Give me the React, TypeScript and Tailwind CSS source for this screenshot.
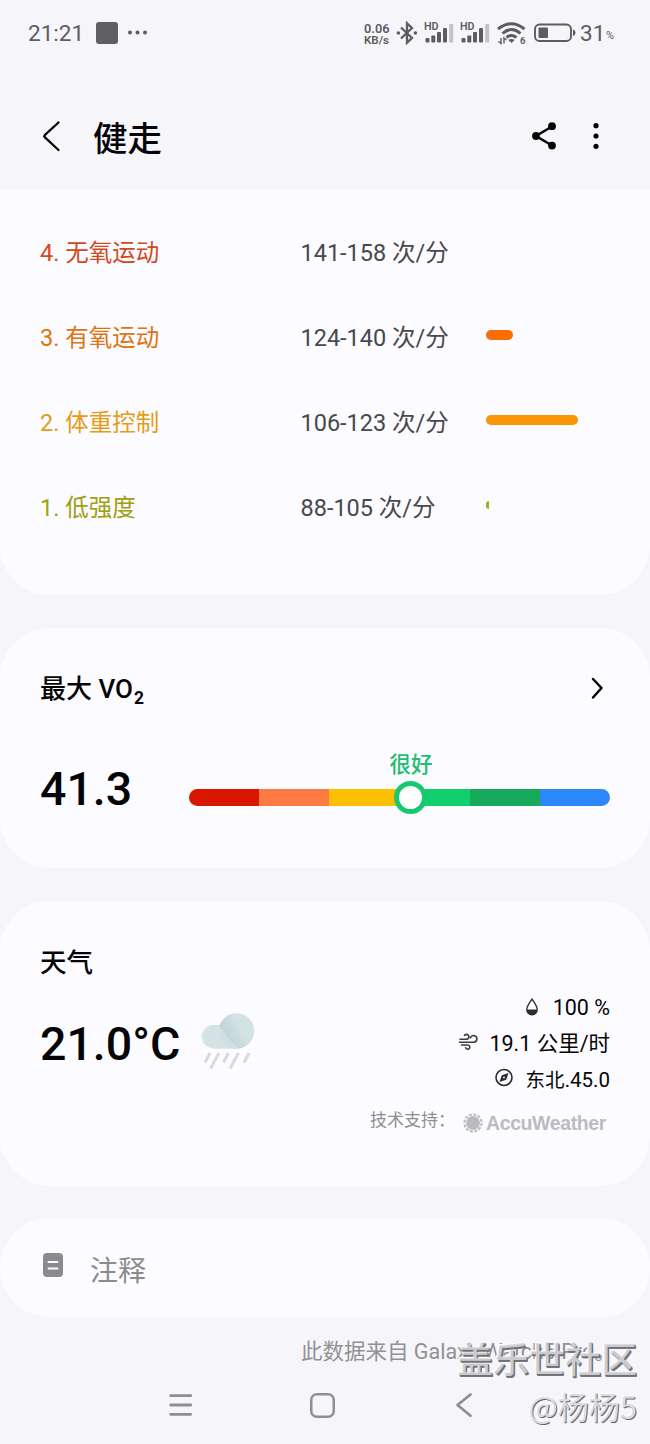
import type { ReactNode } from 'react';

type Zone = { name: string; range: string; text: string; bar: string };

const zones: Zone[] = [
  { name: '4. 无氧运动', range: '141-158 次/分', text: 'text-[#d14a1c]', bar: 'hidden' },
  { name: '3. 有氧运动', range: '124-140 次/分', text: 'text-[#dd7411]', bar: 'w-[27px] bg-[#f96d02]' },
  { name: '2. 体重控制', range: '106-123 次/分', text: 'text-[#e69c15]', bar: 'w-[92px] bg-[#fc9503]' },
  { name: '1. 低强度', range: '88-105 次/分', text: 'text-[#9da012]', bar: '' },
];

const segments = ['bg-[#d91700]', 'bg-[#ff7a42]', 'bg-[#fcc003]', 'bg-[#12cf6e]', 'bg-[#17aa5c]', 'bg-[#2c87fb]'];

function Card({ className, children }: { className: string; children: ReactNode }) {
  return <section className={`bg-[#fcfbff] ${className}`}>{children}</section>;
}

function Signal() {
  return (
    <svg className="h-[26px] w-[31px]" viewBox="0 0 31 26" fill="#5d5c61">
      <text x="0" y="10" fontSize="10.5" fontWeight="600" fontFamily="Roboto, sans-serif" textLength="14.5" lengthAdjust="spacingAndGlyphs">HD</text>
      <rect x="1.500" y="18" width="4" height="4.500" rx="1" />
      <rect x="7.300" y="15.500" width="4" height="7" rx="1" />
      <rect x="13" y="12" width="4" height="10.500" rx="1" />
      <rect x="19" y="8" width="4" height="14.500" rx="1" />
      <rect x="25.200" y="4" width="4" height="18.500" rx="1" fill="#c3c2c8" />
    </svg>
  );
}

function StatusBar() {
  return (
    <div className="flex h-[66px] items-center pl-[28px] text-[#5d5c61]">
      <span className="w-[68px] text-[22.5px] leading-none">21:21</span>
      <span className="h-[22px] w-[22px] rounded-[3px] bg-[#5f5e63]" />
      <svg className="ml-[9px] h-[6px] w-[22px]" viewBox="0 0 22 6" fill="#5d5c61">
        <circle cx="3" cy="2.500" r="2" /><circle cx="10.500" cy="2.500" r="2" /><circle cx="18" cy="2.500" r="2" />
      </svg>
      <svg className="ml-[215px] h-[26px] w-[30px]" viewBox="0 0 30 26" fill="#5d5c61" fontFamily="Roboto, sans-serif" fontSize="12" fontWeight="600">
        <text x="0" y="13" textLength="25.500" lengthAdjust="spacingAndGlyphs">0.06</text>
        <text x="0" y="24.300" fontSize="11.500" textLength="25" lengthAdjust="spacingAndGlyphs">KB/s</text>
      </svg>
      <svg className="ml-[2px] h-[24px] w-[22px]" viewBox="0 0 22 24" fill="none" stroke="#5d5c61" strokeWidth="2.300">
        <path d="M5 6.500 16 17l-5 4.700V2.300L16 7 5 17.500" />
        <circle cx="2.400" cy="12" r="1.800" fill="#5d5c61" stroke="none" />
        <circle cx="19.400" cy="12" r="1.800" fill="#5d5c61" stroke="none" />
      </svg>
      <div className="ml-[6px] flex gap-[5px]"><Signal /><Signal /></div>
      <svg className="ml-[6px] h-[26px] w-[30px]" viewBox="0 0 30 26" fill="none" stroke="#5d5c61" strokeWidth="3">
        <path d="M1 9Q14.500-1.500 27.500 9" />
        <path d="M5.500 13.500Q14.500 5.500 23.500 13.500" />
        <path d="M9.500 17.500Q14.500 13.500 19.500 17.500" />
        <path d="m14.500 23-3.200-3q3.200-2 6.400 0Z" fill="#5d5c61" stroke="none" />
        <path d="M4 18v5.500l-2.500-2M7 23.500V18l2.500 2" strokeWidth="1.400" />
        <text x="23" y="24" fontSize="9.500" fontWeight="700" fontFamily="Roboto, sans-serif" fill="#5d5c61" stroke="none">6</text>
      </svg>
      <svg className="ml-[7px] h-[20px] w-[42px]" viewBox="0 0 42 20">
        <rect x="1" y="1.500" width="36" height="16.500" rx="4.500" fill="none" stroke="#5d5c61" strokeWidth="1.900" />
        <rect x="4.500" y="4.500" width="9.500" height="10.500" rx="1" fill="#5d5c61" />
        <path d="M39 6.500q2.500 .5 2.500 3.200T39 12.900Z" fill="#5d5c61" />
      </svg>
      <span className="ml-[4px] text-[22.5px] leading-none">31</span>
      <span className="mt-[6px] ml-[1px] origin-left scale-x-[0.95] text-[11.5px] leading-none">%</span>
    </div>
  );
}

export default function App() {
  return (
    <div className="relative h-[1444px] w-[650px] overflow-hidden bg-[#f5f5fa] font-['Roboto','Noto_Sans_CJK_SC',sans-serif] text-[#050507]">
      <StatusBar />

      <header className="flex h-[123px] items-start pl-[42px]">
        <svg className="mt-[54px] h-[34px] w-[20px]" viewBox="0 0 20 34" fill="none" stroke="#050507" strokeWidth="2.300" strokeLinecap="round" strokeLinejoin="round">
          <path d="M16.500 2.500 2.700 15.200q-1 1 0 2L16.500 30" />
        </svg>
        <h1 className="mt-[48px] ml-[31px] w-[430px] text-[34.5px] leading-[50px] font-medium">健走</h1>
        <svg className="mt-[55px] ml-[8px] h-[30px] w-[28px]" viewBox="0 0 28 30" fill="#050507">
          <path d="M21 5.500 5 15l16 9.500" fill="none" stroke="#050507" strokeWidth="2.600" />
          <circle cx="5" cy="15" r="3.900" /><circle cx="21" cy="5.200" r="3.900" /><circle cx="21" cy="24.600" r="3.900" />
        </svg>
        <svg className="mt-[55px] ml-[32px] h-[30px] w-[10px]" viewBox="0 0 10 30" fill="#050507">
          <circle cx="5" cy="4.700" r="2.600" /><circle cx="5" cy="15" r="2.600" /><circle cx="5" cy="25.300" r="2.600" />
        </svg>
      </header>

      <Card className="h-[406px] rounded-b-[50px] pt-[21px] pl-[40px]">
        {zones.map((zone) => (
          <div key={zone.name} className="flex h-[85px] items-center text-[23.5px] leading-[34px]">
            <span className={`w-[260px] ${zone.text}`}>{zone.name}</span>
            <span className="w-[186px] pl-[0.500px] text-[#48484d]">{zone.range}</span>
            {zone.bar ? (
              <span className={`mb-[5px] h-[10px] rounded-full ${zone.bar}`} />
            ) : (
              <span className="mb-[5px] h-[8px] w-[3px] rounded-l-full bg-[#91b52b]" />
            )}
          </div>
        ))}
      </Card>

      <Card className="mt-[33px] h-[240px] rounded-[50px] pt-[40px] pr-[40px] pl-[40px]">
        <div className="flex h-[42px] items-center justify-between">
          <h2 className="mt-[8px] flex text-[26px] leading-[42px] font-medium">
            <span>最大 VO</span><span className="mt-[9px] ml-[1px] text-[17.5px] font-bold">2</span>
          </h2>
          <svg className="mr-[5px] h-[24px] w-[16px]" viewBox="0 0 16 24" fill="none" stroke="#050507" strokeWidth="2.500" strokeLinecap="round" strokeLinejoin="round">
            <path d="m4 2 8.500 9L4 20.500" />
          </svg>
        </div>
        <div className="mt-[49px] flex h-[60px] items-center">
          <span className="w-[149px] text-[46.5px] leading-[60px] font-medium">41.3</span>
          <div className="relative mt-[16px] flex-1">
            <div className="flex h-[17px] overflow-hidden rounded-full">
              {segments.map((color) => <span key={color} className={`flex-1 ${color}`} />)}
            </div>
            <span className="absolute top-[-8px] left-[205px] h-[33px] w-[33px] rounded-full border-[5.5px] border-[#18c86f] bg-white" />
            <span className="absolute top-[-41px] left-[200.500px] text-[21.5px] leading-[34px] font-medium whitespace-nowrap text-[#23bd72]">很好</span>
          </div>
        </div>
      </Card>

      <Card className="mt-[33px] flex h-[285px] justify-between rounded-[50px] pt-[40px] pr-[40px] pl-[40px]">
        <div className="pt-[1px]">
          <h2 className="text-[26.5px] leading-[42px] font-medium">天气</h2>
          <div className="mt-[30px] flex h-[60px] items-center">
            <span className="w-[159px] text-[46.5px] leading-[60px] font-medium">21.0°C</span>
            <svg className="mb-[6px] h-[60px] w-[60px]" viewBox="0 0 60 60">
              <defs>
                <linearGradient id="cloud" gradientUnits="userSpaceOnUse" x1="25" y1="25" x2="43" y2="16">
                  <stop offset="0" stopColor="#c1d3d6" /><stop offset="1" stopColor="#d3e2e3" />
                </linearGradient>
              </defs>
              <path d="M14.500 14A11.800 11.800 0 0 0 14.500 37.500H38A17.800 17.800 0 0 0 38 14Z" fill="#d4e3e4" />
              <circle cx="37.500" cy="20" r="17.800" fill="url(#cloud)" />
              <path d="M14.500 37.500a11.800 11.800 0 1 1 9.500-18.500q5 10 16 18.500Z" fill="#d4e4e5" fillOpacity="0.750" />
              <g stroke="#d7dade" strokeWidth="3">
                <path d="m11 42-5 9.500M20 42l-8.500 15.500M29.500 42l-5 9.500M39.500 42 31 57.500M50 42l-5 9.500" />
              </g>
            </svg>
          </div>
        </div>
        <div className="mt-[48px] flex flex-col items-end text-[21px] leading-[36px]">
          <div className="flex h-[36px] items-center gap-[14px]">
            <svg className="mb-[1px] h-[20px] w-[14px]" viewBox="0 0 14 20">
              <path d="M7 2.200Q1.800 9.200 1.800 12.500a5.200 5.200 0 0 0 10.400 0Q12.200 9.200 7 2.200Z" fill="none" stroke="#2c2c30" strokeWidth="1.400" />
              <path d="M2 12.500h10q0 5-5 5t-5-5Z" fill="#2c2c30" />
            </svg>
            <span className="mt-[2px] text-[21.500px]">100 %</span>
          </div>
          <div className="flex h-[36px] items-center gap-[11px]">
            <svg className="mb-[2px] h-[18px] w-[20px]" viewBox="0 0 20 18" fill="none" stroke="#3c3c40" strokeWidth="1.600" strokeLinecap="round">
              <path d="M2 6.200h6.500a2.400 2.400 0 1 0-2-3.700M1.500 9.200h14a3.300 3.300 0 1 0-3-4.500M3.500 12h6.200a2.100 2.100 0 1 1-2 2.800" />
            </svg>
            <span className="mt-[2px] text-[21.5px]">19.1 公里/时</span>
          </div>
          <div className="flex h-[36px] items-center gap-[12px]">
            <svg className="mb-[2px] h-[20px] w-[20px]" viewBox="0 0 20 20">
              <circle cx="10" cy="9.500" r="8" fill="none" stroke="#2c2c30" strokeWidth="1.600" />
              <path d="M14.500 5 12.200 11.700 5.500 14 7.800 7.300Z" fill="#2c2c30" />
              <circle cx="10" cy="9.500" r="0.900" fill="#fcfbff" />
            </svg>
            <span className="mt-[2px] text-[20.5px]"><span className="text-[19.5px]">东北</span>.45.0</span>
          </div>
          <div className="mt-[5px] mr-[4px] flex h-[36px] items-center text-[#8e8e92]">
            <span className="w-[92px] text-[17px] leading-[36px]">技术支持：</span>
            <svg className="mt-[5px] h-[22px] w-[22px]" viewBox="0 0 22 22" fill="#babac0">
              <circle cx="11" cy="11" r="6.900" />
              <circle cx="11" cy="11" r="8.600" fill="none" stroke="#babac0" strokeWidth="2" strokeDasharray="3 1.503" />
            </svg>
            <span className="mt-[5px] ml-[2px] w-[120px] font-['Liberation_Sans'] text-[19.500px] font-bold tracking-[-0.400px] text-[#bbbbc1]">AccuWeather</span>
          </div>
        </div>
      </Card>

      <Card className="mt-[32px] flex h-[99px] items-center rounded-[50px] pl-[43px] text-[#8b8b8f]">
        <svg className="mb-[5px] h-[24px] w-[20px]" viewBox="0 0 20 24">
          <rect width="20" height="24" rx="4" fill="#8b8b8f" />
          <path d="M5.500 9h9M5.500 15.500h9" stroke="#fcfbff" strokeWidth="2" strokeLinecap="round" />
        </svg>
        <span className="mt-[8px] ml-[27px] text-[28px] leading-[40px] font-normal">注释</span>
      </Card>

      <p className="mt-[18px] ml-[301px] h-[34px] text-[21.5px] leading-[34px] whitespace-nowrap text-[#919196]">此数据来自 Galaxy Watch5 Pro。</p>

      <nav className="mt-[21px] flex h-[30px] items-center pl-[168px]">
        <svg className="h-[26px] w-[26px]" viewBox="0 0 26 26" stroke="#8d8d93" strokeWidth="2.800" strokeLinecap="round">
          <path d="M2.700 3.700h20M2.700 13h20M2.700 22.300h20" />
        </svg>
        <span className="ml-[116px] h-[25px] w-[25px] rounded-[7px] border-[2.5px] border-[#8d8d93] shadow-[inset_0_0_0_0.500px_#8d8d93]" />
        <svg className="ml-[119px] h-[28px] w-[20px]" viewBox="0 0 20 28" fill="none" stroke="#8d8d93" strokeWidth="2.700" strokeLinecap="round" strokeLinejoin="round">
          <path d="M16.500 3.500 3.500 14l13 10.700" />
        </svg>
      </nav>

      <div className="absolute top-[1337px] right-[13px] flex flex-col items-end whitespace-nowrap">
        <span className="text-[36px] leading-[48px] font-medium text-[#dcdce0]/85 [text-shadow:1px_1px_0_#707074,1.5px_2px_0_#77777b,-1px_-1px_0_#fff]">盖乐世社区</span>
        <span className="-mt-[4px] font-['Noto_Sans_CJK_SC'] text-[31px] leading-[50px] text-[#dcdce0] [text-shadow:1px_1px_0_#66666a,-1px_-1px_0_#fff]">@杨杨5</span>
      </div>
    </div>
  );
}
